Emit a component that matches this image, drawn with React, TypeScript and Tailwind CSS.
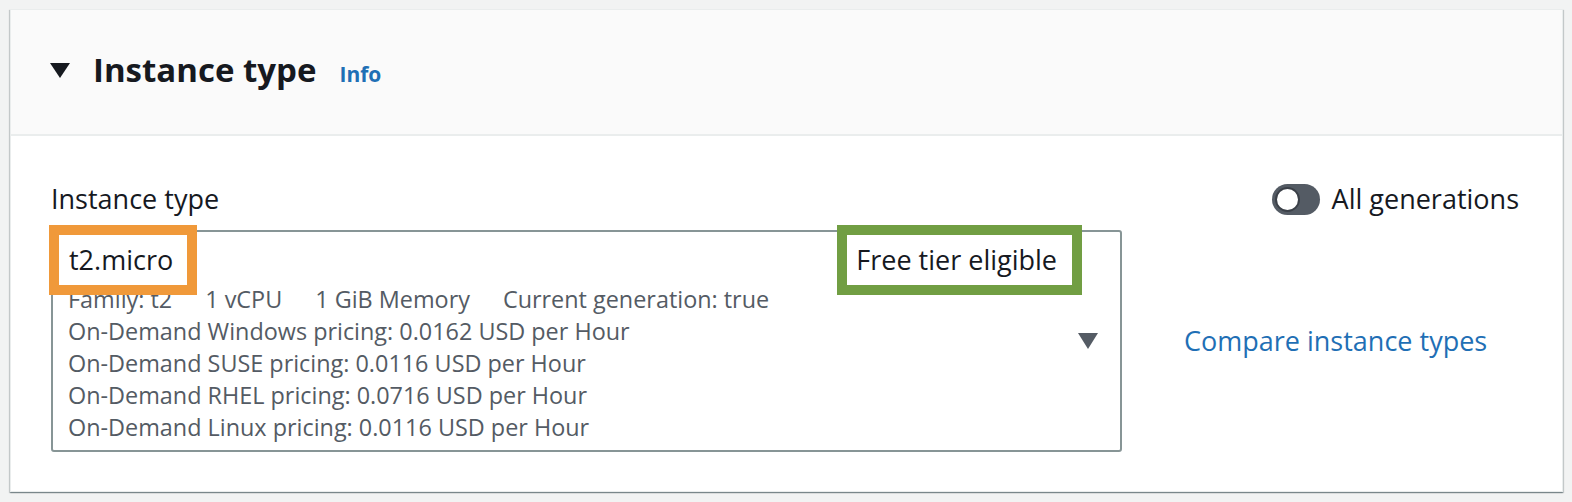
import React from 'react';

const detailLines = [
  'On-Demand Windows pricing: 0.0162 USD per Hour',
  'On-Demand SUSE pricing: 0.0116 USD per Hour',
  'On-Demand RHEL pricing: 0.0716 USD per Hour',
  'On-Demand Linux pricing: 0.0116 USD per Hour',
];

function Toggle() {
  return (
    <div className="flex h-[31px] w-[48px] items-center rounded-full bg-[#545b64] pl-[3px]">
      <div className="h-[25px] w-[25px] rounded-full border-[2px] border-[#3b4048] bg-white" />
    </div>
  );
}

export default function App() {
  return (
    <div
      className="min-h-screen bg-[#f2f3f3] pt-[9px] pl-[10px] pr-[9px] pb-[9px]"
      style={{ fontFamily: '"Open Sans", "Noto Sans", sans-serif' }}
    >
      <div className="border border-[#eaeded] bg-white shadow-[0_1px_1px_0_rgba(0,28,36,0.3),1px_1px_1px_0_rgba(0,28,36,0.15),-1px_1px_1px_0_rgba(0,28,36,0.15)]">
        {/* header */}
        <div className="flex h-[126px] items-center border-b-2 border-[#eaeded] bg-[#fafafa] pl-[39px] pb-[4px]">
          <svg width="20" height="15" viewBox="0 0 20 15" className="mr-[23px] mt-[1px]">
            <polygon points="0,0 20,0 10,15" fill="#16191f" />
          </svg>
          <div className="flex items-baseline gap-[23px]">
            <h2 className="text-[33px] font-bold leading-[46px] text-[#16191f]">Instance type</h2>
            <span className="text-[21px] font-bold text-[#1f6fb5]">Info</span>
          </div>
        </div>

        {/* body */}
        <div className="pt-[45px] pr-[43px] pb-[39px] pl-[40px]">
          <div className="flex items-center justify-between">
            <span className="text-[27px] leading-[36px] text-[#16191f]">Instance type</span>
            <div className="flex items-center gap-[12px]">
              <Toggle />
              <span className="text-[27px] leading-[36px] text-[#16191f]">All generations</span>
            </div>
          </div>

          <div className="mt-[13px] flex items-center gap-[62px]">
            <div className="relative w-[1071px] rounded-[3px] border-2 border-[#879596] pr-[38px] pb-[7px] pl-[15px]">
              <div className="relative z-10 -mt-[7px] -mb-[12px] flex items-start justify-between">
                <span className="-ml-[19px] border-[10px] border-[#f0993a] bg-white py-[7px] pr-[14px] pl-[10px] text-[27px] leading-[36px] text-[#16191f]">
                  t2.micro
                </span>
                <span className="border-[10px] border-[#719e43] bg-white py-[7px] pr-[15px] pl-[9px] text-[27px] leading-[36px] text-[#16191f]">
                  Free tier eligible
                </span>
              </div>
              <div className="text-[23.4px] leading-[32px] text-[#545b64]">
                <div className="flex gap-[33px]">
                  <span>Family: t2</span>
                  <span>1 vCPU</span>
                  <span>1 GiB Memory</span>
                  <span>Current generation: true</span>
                </div>
                {detailLines.map((line) => (
                  <div key={line}>{line}</div>
                ))}
              </div>
              <svg
                width="20"
                height="16"
                viewBox="0 0 20 16"
                className="absolute right-[22px] top-1/2 -translate-y-1/2"
              >
                <polygon points="0,0 20,0 10,16" fill="#545b64" />
              </svg>
            </div>
            <span className="text-[27px] leading-[36px] text-[#1f6fb5]">Compare instance types</span>
          </div>
        </div>
      </div>
    </div>
  );
}
